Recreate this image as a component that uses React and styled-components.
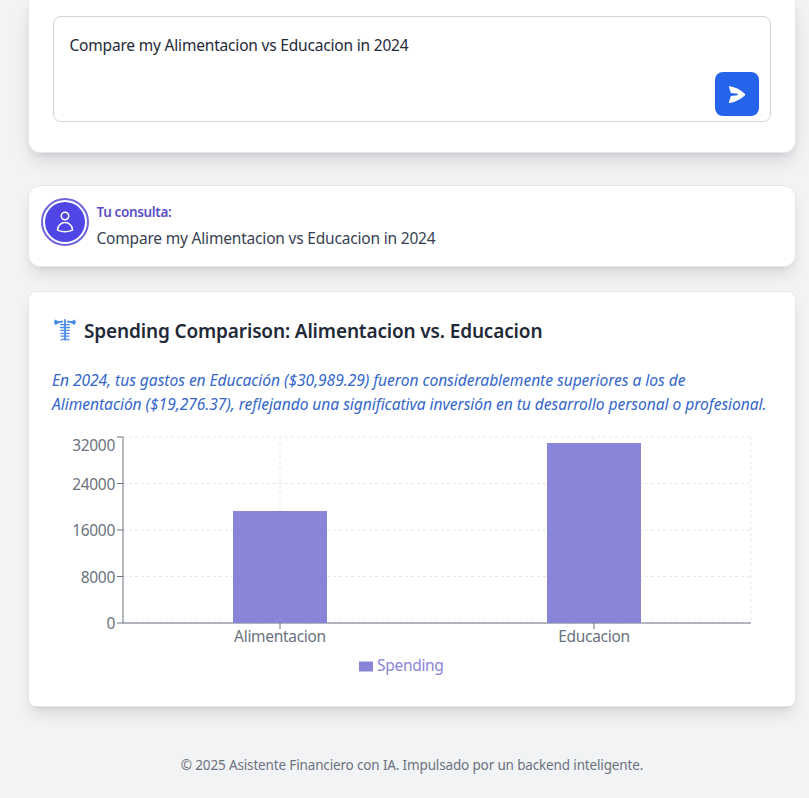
import React from "react";
import styled, { createGlobalStyle } from "styled-components";

const Global = createGlobalStyle`
  *, *::before, *::after { box-sizing: border-box; }
  body { margin: 0; background: #f2f3f5; font-family: "Noto Sans", "Open Sans", sans-serif; }
  p, h2 { margin: 0; }
`;
const Page = styled.div`
  width: 809px; height: 798px; overflow: hidden;
  padding: 0 13px 0 28px;
`;
const Card = styled.section`
  background: #fff;
  border: 1px solid #e5e7eb;
  border-radius: ${(p) => p.$radius || 8}px;
  box-shadow: 0 10px 15px -3px rgba(0,0,0,.1), 0 4px 6px -4px rgba(0,0,0,.1);
`;
const PromptCard = styled(Card)`
  height: 153px; padding: 16px 24px 0;
  border-width: 0 1px 1px; border-radius: 0 0 12px 12px;
  box-shadow: 0 10px 20px -3px rgba(0,0,0,.12), 0 4px 8px -3px rgba(0,0,0,.1);
`;
const PromptBox = styled.div`
  height: 106px; border: 1px solid #d1d5db; border-radius: 8px;
  padding: 16px 11px 5px 15.5px;
  display: flex; justify-content: space-between; align-items: flex-start;
`;
const Line = styled.p`
  white-space: nowrap; font-size: 15.5px; line-height: 24px;
  letter-spacing: -0.19px; color: ${(p) => p.$color};
`;
const SendButton = styled.button`
  align-self: flex-end; width: 44px; height: 44px; padding: 0; border: 0; border-radius: 8px;
  background: #2563eb; display: flex; align-items: center; justify-content: center;
`;
const QueryCard = styled(Card)`
  height: 82px; margin-top: 32px; padding: 12px; display: flex; gap: 7.5px;
`;
const Avatar = styled.div`
  width: 48px; height: 48px; border-radius: 50%; border: 2px solid #6f66dc;
  padding: 2px; flex: none;
`;
const AvatarFill = styled.div`
  width: 40px; height: 40px; border-radius: 50%; background: #4f46e5;
  display: flex; align-items: center; justify-content: center;
`;
const QueryText = styled.div`padding-top: 4px;`;
const Label = styled.p`
  font-size: 13.5px; font-weight: 600; line-height: 20px; letter-spacing: -0.35px;
  color: #5b50c8; margin-bottom: 4px; white-space: nowrap;
`;
const ResultCard = styled(Card)`
  height: 416px; margin-top: 24px; padding: 24px 23px 0;
`;
const Heading = styled.div`
  display: flex; align-items: center; height: 30px; gap: 8px;
`;
const Title = styled.h2`
  font-size: 19px; font-weight: 600; line-height: 28px; letter-spacing: -0.15px;
  color: #1f2937; white-space: nowrap;
`;
const Summary = styled.div`margin-top: 22px; height: 48px;`;
const SummaryLine = styled.p`
  font-size: 15.6px; font-style: italic; line-height: 24px; white-space: nowrap;
  letter-spacing: -0.05px; color: #3467cc;
`;
const Chart = styled.svg`
  display: block; width: 718px; height: 262px; margin: 19px 0 0 1px; overflow: visible;
  text { font-size: 15.5px; letter-spacing: -0.3px; fill: #6b7280; }
  text.legend { fill: #8884d8; }
`;
const Footer = styled.footer`
  margin-top: 48px; text-align: center; color: #6b7280; font-size: 13.5px; line-height: 20px;
  letter-spacing: -0.15px;
`;

const ticks = [[0, 188, 188], [8000, 141.5, 141.5], [16000, 95, 95], [24000, 48.5, 48.5], [32000, 2, 9.5]];
const bars = [["Alimentacion", 227, 76], ["Educacion", 541, 8]];

const ComparisonChart = () => (
  <Chart viewBox="0 0 718 262">
    <g stroke="#e5e7eb" strokeDasharray="3 3">
      {ticks.map(([v, y]) => <line key={v} x1="70" x2="698" y1={y} y2={y} />)}
      {[227, 541, 698].map((x) => <line key={x} x1={x} x2={x} y1="2" y2="188" />)}
    </g>
    <g stroke="#6b7280">
      <path d="M70 2V188H698" fill="none" />
      {ticks.map(([v, y]) => <line key={v} x1="64" x2="70" y1={y} y2={y} />)}
      {bars.map(([n, x]) => <line key={n} x1={x} x2={x} y1="188" y2="194" />)}
    </g>
    {bars.map(([n, x, y]) => <rect key={n} x={x - 47} y={y} width="94" height={188 - y} fill="#8884d8" />)}
    {ticks.map(([v, , y]) => <text key={v} x="62" y={y + 6} textAnchor="end">{v}</text>)}
    {bars.map(([n, x]) => <text key={n} x={x} y="207" textAnchor="middle">{n}</text>)}
    <rect x="306" y="226.5" width="14" height="10" fill="#8884d8" />
    <text className="legend" x="324" y="236">Spending</text>
  </Chart>
);

const SpineIcon = () => (
  <svg width="24" height="24" viewBox="0 0 24 24" fill="none" stroke="#4a8be6" strokeLinecap="round">
    <path d="M3 .4 6 1.9 11 1.7V3.5L7 4.1 3.4 6 1.9 3.6ZM22.9.4 19.9 1.9 15 1.7V3.5L18.9 4.1 22.5 6 23.9 3.6Z" fill="#4a8be6" stroke="none" />
    <path d="M13 1V20.8" strokeWidth="1.8" />
    <path d="M8.6 5.6H17.4M8.6 8.5H17.4M8.8 11.4H17.2M9 14.3H17M9.2 17.2H16.8M9 20.8Q11 20 13 20.2 15 20 17 20.8" strokeWidth="1.3" />
  </svg>
);

export default function App() {
  return (
    <>
      <Global />
      <Page>
        <PromptCard>
          <PromptBox>
            <Line $color="#1f2937">Compare my Alimentacion vs Educacion in 2024</Line>
            <SendButton aria-label="Enviar">
              <svg width="20" height="20" viewBox="0 0 20 20" fill="#fff">
                <path d="M2.6 2.2Q1.6 2 1.9 3L3.9 8.9 10.4 9.7Q11.6 10.5 10.4 11.3L3.9 12.1 1.9 18.2Q1.7 19.2 2.7 19 11.5 17.6 18 11.3 18.6 10.6 18 9.9 11.5 3.6 2.6 2.2Z" />
              </svg>
            </SendButton>
          </PromptBox>
        </PromptCard>
        <QueryCard $radius={12}>
          <Avatar>
            <AvatarFill>
              <svg width="24" height="24" viewBox="0 0 24 24" fill="none" stroke="#fff" strokeWidth="1.5" strokeLinecap="round" strokeLinejoin="round">
                <path d="M15.75 6a3.75 3.75 0 1 1-7.5 0 3.75 3.75 0 0 1 7.5 0ZM4.5 20.1a7.5 7.5 0 0 1 15 0A17.9 17.9 0 0 1 12 21.75c-2.68 0-5.2-.58-7.5-1.65Z" />
              </svg>
            </AvatarFill>
          </Avatar>
          <QueryText>
            <Label>Tu consulta:</Label>
            <Line $color="#374151">Compare my Alimentacion vs Educacion in 2024</Line>
          </QueryText>
        </QueryCard>
        <ResultCard>
          <Heading>
            <SpineIcon />
            <Title>Spending Comparison: Alimentacion vs. Educacion</Title>
          </Heading>
          <Summary>
            <SummaryLine>En 2024, tus gastos en Educación ($30,989.29) fueron considerablemente superiores a los de</SummaryLine>
            <SummaryLine>Alimentación ($19,276.37), reflejando una significativa inversión en tu desarrollo personal o profesional.</SummaryLine>
          </Summary>
          <ComparisonChart />
        </ResultCard>
        <Footer>© 2025 Asistente Financiero con IA. Impulsado por un backend inteligente.</Footer>
      </Page>
    </>
  );
}
